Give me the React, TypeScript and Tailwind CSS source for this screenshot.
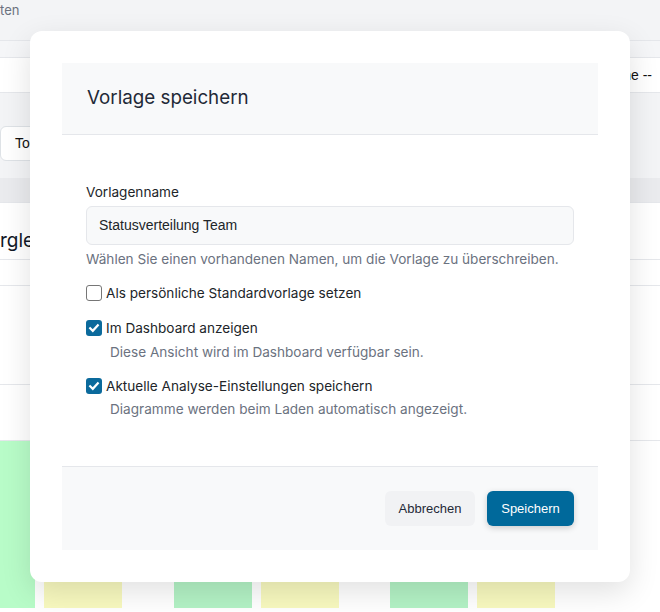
import React from "react";

const inter = { fontFamily: "Inter, 'Noto Sans', sans-serif" };

function Check({ checked }: { checked: boolean }) {
  if (!checked) {
    return (
      <span className="w-[16px] h-[16px] shrink-0 rounded-[3px] border border-[#767676] bg-white" />
    );
  }
  return (
    <span className="w-[16px] h-[16px] shrink-0 rounded-[3px] bg-[#0b6a9c] flex items-center justify-center">
      <svg width="12" height="12" viewBox="0 0 12 12" fill="none">
        <path d="M2.2 6.3 L4.8 8.8 L9.8 3.3" stroke="white" strokeWidth="2.2" strokeLinecap="square" />
      </svg>
    </span>
  );
}

export default function App() {
  return (
    <div className="relative w-[660px] h-[612px] overflow-hidden bg-white font-['Inter',sans-serif]">
      {/* background page */}
      <div className="flex flex-col w-full">
        <div className="h-[41px] bg-[#f3f4f6] border-b border-[#e5e7eb] text-[13px] leading-[20px] text-[#6b7280]">
          ten
        </div>
        <div className="h-[17px] bg-[#f5f6f8] border-b border-[#e5e7eb]" />
        <div className="h-[35px] bg-white border-b border-[#e5e7eb] flex items-center justify-end pr-[8px] text-[14px] text-[#111]">
          <span className="font-['Liberation_Sans',sans-serif]">-- Keine --</span>
        </div>
        <div className="h-[85px] bg-[#f3f4f6] pt-[33px]">
          <div className="h-[35px] w-[80px] bg-white border border-[#dee2e6] rounded-[6px] flex items-center pl-[14px] text-[14px] text-[#111] font-['Liberation_Sans',sans-serif]">
            Toggle
          </div>
        </div>
        <div className="h-[25px] bg-[#eaebee] border-b border-[#e5e7eb]" />
        <div className="h-[57px] bg-white border-b border-[#e5e7eb] flex items-end pb-[4px]">
          <span className="text-[19px] text-[#111827]">rgleich</span>
        </div>
        <div className="h-[26px] bg-white border-b border-[#e5e7eb]" />
        <div className="h-[99px] bg-white border-b border-[#e5e7eb]" />
        <div className="h-[56px] bg-white border-b border-[#e5e7eb]" />
        <div className="h-[167px] bg-white relative flex items-end">
          <div className="flex items-end w-full h-full gap-0">
            <div className="w-[35px] h-[167px] bg-[#b8fcc8]" />
            <div className="w-[9px]" />
            <div className="w-[78px] h-[60px] bg-[#f8f9bf]" />
            <div className="w-[52px]" />
            <div className="w-[78px] h-[60px] bg-[#b3f2c5]" />
            <div className="w-[9px]" />
            <div className="w-[78px] h-[60px] bg-[#f8f9bf]" />
            <div className="w-[51px]" />
            <div className="w-[78px] h-[60px] bg-[#b3f2c5]" />
            <div className="w-[9px]" />
            <div className="w-[78px] h-[60px] bg-[#f8f9bf]" />
          </div>
        </div>
      </div>

      {/* modal */}
      <div
        className="absolute top-[31px] left-[30px] w-[600px] bg-white rounded-[12px] p-[32px] shadow-[0_10px_30px_rgba(0,0,0,0.12)]"
        style={inter}
      >
        <div className="h-[72px] bg-[#f8f9fa] border-b border-[#e5e7eb] flex items-center px-[25px]">
          <h2 className="text-[18.8px] text-[#1f2937] font-normal leading-none">Vorlage speichern</h2>
        </div>

        <div className="px-[24px] pt-[47px] pb-[47px] text-[13.6px]">
          <label className="block leading-[20px] text-[#212529]">Vorlagenname</label>
          <div className="mt-[4px] h-[39px] rounded-[6px] border border-[#e5e7eb] bg-[#f8f9fa] flex items-center px-[12px] text-[14px] text-[#212529] font-['Liberation_Sans',sans-serif]">
            Statusverteilung Team
          </div>
          <p className="mt-[4px] leading-[20px] text-[#6b7280]">
            Wählen Sie einen vorhandenen Namen, um die Vorlage zu überschreiben.
          </p>

          <div className="mt-[14px] flex items-center gap-[4px] leading-[20px] text-[#212529]">
            <Check checked={false} />
            <span>Als persönliche Standardvorlage setzen</span>
          </div>

          <div className="mt-[15px] flex items-center gap-[4px] leading-[20px] text-[#212529]">
            <Check checked={true} />
            <span>Im Dashboard anzeigen</span>
          </div>
          <p className="mt-[4px] pl-[24px] leading-[20px] text-[#6b7280]">
            Diese Ansicht wird im Dashboard verfügbar sein.
          </p>

          <div className="mt-[14px] flex items-center gap-[4px] leading-[20px] text-[#212529]">
            <Check checked={true} />
            <span>Aktuelle Analyse-Einstellungen speichern</span>
          </div>
          <p className="mt-[3px] pl-[24px] leading-[20px] text-[#6b7280]">
            Diagramme werden beim Laden automatisch angezeigt.
          </p>
        </div>

        <div className="h-[84px] bg-[#f8f9fa] border-t border-[#e5e7eb] flex items-center justify-end gap-[12px] px-[24px]">
          <button className="h-[35px] w-[90px] rounded-[6px] bg-[#f1f2f4] text-[13px] text-[#1f2937] font-['Liberation_Sans',sans-serif]">
            Abbrechen
          </button>
          <button className="h-[35px] w-[87px] rounded-[6px] bg-[#00699b] text-[13px] text-white shadow-[0_2px_6px_rgba(0,0,0,0.18)] font-['Liberation_Sans',sans-serif]">
            Speichern
          </button>
        </div>
      </div>
    </div>
  );
}
